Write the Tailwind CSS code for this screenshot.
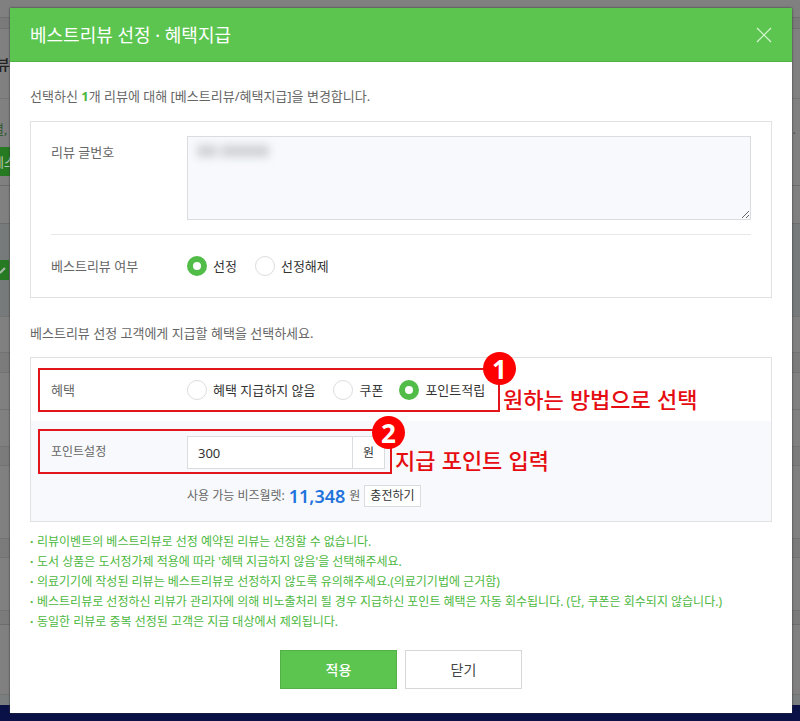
<!DOCTYPE html>
<html lang="ko">

<head>
    <meta charset="UTF-8">
    <meta name="viewport" content="width=device-width, initial-scale=1.0">
    <title>베스트리뷰 선정 · 혜택지급</title>
    <script src="https://cdn.jsdelivr.net/npm/@tailwindcss/browser@4"></script>
</head>

<body class="grid min-h-screen bg-[#808080] font-['Noto_Sans','Noto_Sans_CJK_KR',sans-serif] text-[13px] leading-5 text-[#666]">

    <!-- dimmed page behind the dialog -->
    <div class="col-start-1 row-start-1 flex flex-col overflow-hidden whitespace-nowrap" aria-hidden="true">
        <div class="h-[18px] border-b border-[#707070]"></div>
        <div class="h-[11px] border-b border-[#707070] bg-[#7a7a7a]"></div>
        <div class="flex h-[70px] items-center border-b border-[#757575] text-[15px] font-medium text-[#222]">
            <span class="-ml-1">뷰</span>
        </div>
        <div class="flex h-12 items-center justify-between pt-3 text-[#2f5a2b]">
            <span class="-ml-2">별,</span>
            <span class="mr-1 text-[#555]">.</span>
        </div>
        <div class="flex h-[29px] items-center bg-[#267a22] text-[#b5c8b4]">
            <span class="-ml-2 w-5">베스</span>
            <span class="h-full grow bg-[#808080]"></span>
        </div>
        <div class="mt-[9px] h-[39px] border-y border-[#6d6d6d]"></div>
        <div class="h-9 bg-[#777a7a]"></div>
        <div class="flex h-5 bg-[#777a7a]">
            <svg class="h-5 w-[9px] bg-[#267a22]" viewBox="0 0 9 20" fill="none" stroke="#a9bca8" stroke-width="2">
                <path d="M0 13l5-5" />
            </svg>
        </div>
        <div class="h-[37px] border-b border-[#737373] bg-[#777a7a]"></div>
        <div class="h-9 border-b border-[#737373]"></div>
        <div class="h-5 border-b border-[#737373] bg-[#7b7b7b]"></div>
        <div class="h-[37px] border-b border-[#737373]"></div>
        <div class="h-[37px] border-b border-[#737373]"></div>
        <div class="h-[19px] border-b border-[#737373] bg-[#7b7b7b]"></div>
        <div class="h-[73px] border-b border-[#737373]"></div>
        <div class="h-[19px] border-b border-[#737373] bg-[#7b7b7b]"></div>
        <div class="h-[53px] border-b border-[#737373]"></div>
        <div class="h-[14px] border-b border-[#6d6d6d] bg-[#7b7b7b]"></div>
        <div class="h-[70px] border-b border-[#737373]"></div>
        <div class="h-[10px] bg-[#7a7e7e]"></div>
        <div class="h-0 grow bg-[#0a1147]"></div>
    </div>

    <main role="dialog" aria-labelledby="dialogTitle"
        class="z-10 col-start-1 row-start-1 my-2 mr-2 ml-[10px] self-start bg-white shadow-[0_0_2px_#333]">
        <header class="flex h-[54px] items-center justify-between border-b border-[#51b147] bg-[#5cc550] px-5">
            <h1 id="dialogTitle" class="text-[18px] text-white">베스트리뷰 선정 · 혜택지급</h1>
            <button type="button" aria-label="창 닫기">
                <svg class="size-4" viewBox="0 0 16 16" fill="none" stroke="#d8f5d4" stroke-width="1.2">
                    <path d="M1 1l14 14M15 1L1 15" />
                </svg>
            </button>
        </header>

        <form class="px-5 py-6">
            <p>선택하신 <b class="text-[#4cb840]">1</b>개 리뷰에 대해 [베스트리뷰/혜택지급]을 변경합니다.</p>

            <section class="mt-[15px] border border-[#dfe1e2] px-5">
                <div class="grid grid-cols-[136px_1fr] border-b border-[#e8e8e8] py-[14px]">
                    <label for="reviewNo" class="pt-[6px]">리뷰 글번호</label>
                    <div class="relative">
                        <textarea id="reviewNo"
                            class="block h-[84px] w-full border border-[#d9dddf] bg-[#f7f9fd] px-[10px] py-1"></textarea>
                        <!-- masked review number -->
                        <div class="absolute top-[9px] left-[10px] flex gap-1 blur-[4px]">
                            <span class="h-3 w-5 bg-[#d0d2d5]"></span>
                            <span class="h-3 w-12 bg-[#d0d2d5]"></span>
                        </div>
                    </div>
                </div>
                <div class="grid h-[62px] grid-cols-[136px_1fr] items-center">
                    <span id="bestLabel">베스트리뷰 여부</span>
                    <div role="radiogroup" aria-labelledby="bestLabel" class="flex gap-[18px] text-[#333]">
                        <label class="flex items-center gap-[6px]">
                            <input type="radio" name="best" checked
                                class="size-5 appearance-none rounded-full border border-[#ddd] bg-white checked:border-[6px] checked:border-[#51bd48]">
                            선정
                        </label>
                        <label class="flex items-center gap-[6px]">
                            <input type="radio" name="best"
                                class="size-5 appearance-none rounded-full border border-[#ddd] bg-white checked:border-[6px] checked:border-[#51bd48]">
                            선정해제
                        </label>
                    </div>
                </div>
            </section>

            <p class="mt-[25px]">베스트리뷰 선정 고객에게 지급할 혜택을 선택하세요.</p>

            <section class="mt-[14px] border border-[#dfe1e2]">
                <div class="relative grid h-[63px] grid-cols-[136px_1fr] items-center px-5">
                    <span id="benefitLabel">혜택</span>
                    <div role="radiogroup" aria-labelledby="benefitLabel" class="flex gap-[18px] text-[#333]">
                        <label class="flex items-center gap-[6px]">
                            <input type="radio" name="benefit"
                                class="size-5 appearance-none rounded-full border border-[#ddd] bg-white checked:border-[6px] checked:border-[#51bd48]">
                            혜택 지급하지 않음
                        </label>
                        <label class="flex items-center gap-[6px]">
                            <input type="radio" name="benefit"
                                class="size-5 appearance-none rounded-full border border-[#ddd] bg-white checked:border-[6px] checked:border-[#51bd48]">
                            쿠폰
                        </label>
                        <label class="-ml-0.5 flex items-center gap-[6px]">
                            <input type="radio" name="benefit" checked
                                class="size-5 appearance-none rounded-full border border-[#ddd] bg-white checked:border-[6px] checked:border-[#51bd48]">
                            포인트적립
                        </label>
                    </div>
                    <!-- step 1 callout -->
                    <div class="pointer-events-none absolute top-[10px] left-[7px] h-11 w-[462px] border-2 border-[#e0161b]">
                        <span class="absolute -top-[18px] -right-[18px] grid size-[33px] place-items-center rounded-full bg-[#f00] text-[26px] font-bold text-white">1</span>
                        <strong class="absolute top-[14px] left-full ml-[5px] font-['Noto_Sans_CJK_KR'] text-[22px] leading-7 font-medium whitespace-nowrap text-[#e60d12]">원하는 방법으로 선택</strong>
                    </div>
                </div>

                <div class="relative grid grid-cols-[136px_1fr] bg-[#f7f9fc] px-5 py-[15px]">
                    <label for="point" class="pt-[6px] text-[12px]">포인트설정</label>
                    <div>
                        <div class="flex h-[33px] w-[198px] border border-[#d9dddf] bg-white text-[#333]">
                            <input id="point" type="text" value="300" class="w-0 grow px-[10px]">
                            <span class="grid w-8 place-items-center border-l border-[#d9dddf] text-[12px]">원</span>
                        </div>
                        <div class="mt-4 flex h-[21px] items-center gap-1 text-[12px]">
                            사용 가능 비즈월렛:
                            <b class="text-[18px] font-semibold text-[#1f74dc]">11,348</b>
                            원
                            <button type="button" class="flex h-[22px] items-center border border-[#d9dddf] bg-white px-[5px] text-[#333]">충전하기</button>
                        </div>
                    </div>
                    <!-- step 2 callout -->
                    <div class="pointer-events-none absolute top-2 left-[7px] h-[45px] w-[354px] border-2 border-[#e0161b]">
                        <span class="absolute -top-[15px] -right-[15px] grid size-[33px] place-items-center rounded-full bg-[#f00] text-[26px] font-bold text-white">2</span>
                        <strong class="absolute top-[14px] left-full ml-[5px] font-['Noto_Sans_CJK_KR'] text-[22px] leading-7 font-medium whitespace-nowrap text-[#e60d12]">지급 포인트 입력</strong>
                    </div>
                </div>
            </section>

            <ul class="mt-[10px] text-[12px] text-[#4cb840] *:flex *:before:w-[7px] *:before:font-bold *:before:content-['·']">
                <li>리뷰이벤트의 베스트리뷰로 선정 예약된 리뷰는 선정할 수 없습니다.</li>
                <li>도서 상품은 도서정가제 적용에 따라 '혜택 지급하지 않음'을 선택해주세요.</li>
                <li>의료기기에 작성된 리뷰는 베스트리뷰로 선정하지 않도록 유의해주세요.(의료기기법에 근거함)</li>
                <li>베스트리뷰로 선정하신 리뷰가 관리자에 의해 비노출처리 될 경우 지급하신 포인트 혜택은 자동 회수됩니다. (단, 쿠폰은 회수되지 않습니다.)</li>
                <li>동일한 리뷰로 중복 선정된 고객은 지급 대상에서 제외됩니다.</li>
            </ul>

            <div class="mt-[18px] flex justify-center gap-2 text-[14px]">
                <button type="submit" class="h-[39px] w-[117px] border border-[#51b147] bg-[#5cc550] font-medium text-white">적용</button>
                <button type="button" class="h-[39px] w-[117px] border border-[#d5d7d8] bg-white text-[#444]">닫기</button>
            </div>
        </form>
    </main>
</body>

</html>
